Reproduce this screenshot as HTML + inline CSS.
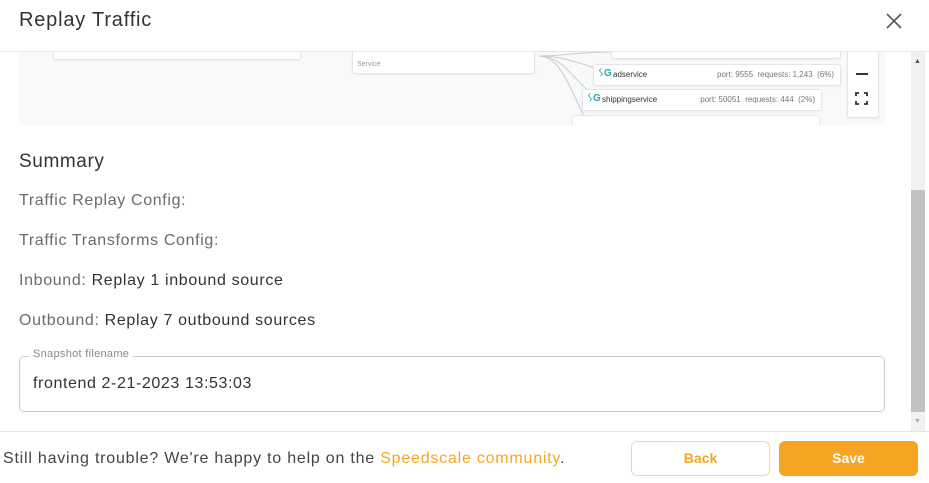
<!DOCTYPE html>
<html><head><style>
body{margin:0;width:929px;height:483px;overflow:hidden;background:#fff;font-family:"Liberation Sans",sans-serif;position:relative}
.a{position:absolute}
.t{color:#6b6b6b;font-size:16px;letter-spacing:0.65px}
.t b{font-weight:normal;color:#333}
.node{position:absolute;background:#fff;border:1px solid #e3e5e8;border-radius:3px;font-size:8px;color:#555;box-shadow:0 1px 2px rgba(0,0,0,.05)}
</style></head><body>
<div class="a" style="left:19px;top:9px;font-size:20px;color:#333;letter-spacing:0.8px">Replay Traffic</div>
<svg class="a" style="left:885px;top:12px" width="18" height="18"><path d="M2 2L16 16M16 2L2 16" stroke="#555" stroke-width="1.6"/></svg>
<div class="a" style="left:0;top:51px;width:929px;height:1px;background:#e5e5e5"></div>
<div class="a" style="left:19px;top:52px;width:866px;height:73px;background:#f8f9fb;overflow:hidden">
 <div class="node" style="left:34px;top:-10px;width:246px;height:16px"></div>
 <div class="node" style="left:333px;top:-10px;width:181px;height:30px"><span style="position:absolute;left:4px;top:18px;font-size:7px;color:#999">Service</span></div>
 <svg class="a" style="left:515px;top:0" width="80" height="73"><g stroke="#ccc" fill="none"><path d="M5 4C30 4 40 10 80 22"/><path d="M5 4C30 4 40 30 65 48"/><path d="M5 4C30 4 40 50 55 73"/><path d="M5 4C30 4 40 0 80 0"/></g></svg>
 <div class="node" style="left:592px;top:-6px;width:228px;height:11px"></div>
 <div class="node" style="left:574px;top:12px;width:246px;height:20px"><span style="position:absolute;left:4px;top:3px;color:#2aa;font-size:10px;font-weight:bold">ᛊG</span><span style="position:absolute;left:19px;top:5px;color:#333">adservice</span><span style="position:absolute;right:6px;top:5px;color:#777">port: 9555 &nbsp;requests: 1,243 &nbsp;(6%)</span></div>
 <div class="node" style="left:563px;top:37px;width:238px;height:20px"><span style="position:absolute;left:4px;top:3px;color:#2aa;font-size:10px;font-weight:bold">ᛊG</span><span style="position:absolute;left:19px;top:5px;color:#333">shippingservice</span><span style="position:absolute;right:6px;top:5px;color:#777">port: 50051 &nbsp;requests: 444 &nbsp;(2%)</span></div>
 <div class="node" style="left:553px;top:63px;width:246px;height:20px"></div>
 <div class="node" style="left:828px;top:-4px;width:30px;height:68px;border-radius:2px">
  <div style="position:absolute;left:8px;top:24px;width:12px;height:2px;background:#333"></div>
  <svg style="position:absolute;left:7px;top:43px" width="13" height="13"><path d="M1 4V1H4M9 1H12V4M12 9V12H9M4 12H1V9" stroke="#333" stroke-width="1.8" fill="none"/></svg>
 </div>
</div>
<div class="a" style="left:911px;top:52px;width:14px;height:379px;background:#f1f1f1"></div>
<div class="a" style="left:911px;top:190px;width:14px;height:222px;background:#c1c1c1"></div>
<div class="a" style="left:914px;top:58px;font-size:7px;color:#555">▲</div>
<div class="a" style="left:914px;top:418px;font-size:7px;color:#aaa">▼</div>
<div class="a" style="left:19px;top:151px;font-size:19px;color:#333;letter-spacing:0.6px">Summary</div>
<div class="a t" style="left:19px;top:192px">Traffic Replay Config:</div>
<div class="a t" style="left:19px;top:232px">Traffic Transforms Config:</div>
<div class="a t" style="left:19px;top:272px">Inbound: <b>Replay 1 inbound source</b></div>
<div class="a t" style="left:19px;top:312px">Outbound: <b>Replay 7 outbound sources</b></div>
<div class="a" style="left:19px;top:356px;width:864px;height:54px;border:1px solid #ccc;border-radius:5px"></div>
<div class="a" style="left:29px;top:348px;background:#fff;padding:0 4px;font-size:11px;color:#888;letter-spacing:0.3px">Snapshot filename</div>
<div class="a" style="left:33px;top:375px;font-size:16px;color:#333;letter-spacing:0.6px">frontend 2-21-2023 13:53:03</div>
<div class="a" style="left:0;top:431px;width:929px;height:1px;background:#e5e5e5"></div>
<div class="a" style="left:3px;top:450px;font-size:16px;color:#444;letter-spacing:0.78px">Still having trouble? We're happy to help on the <span style="color:#f5a623">Speedscale community</span>.</div>
<div class="a" style="left:631px;top:441px;width:137px;height:33px;border:1px solid #f7d59b;border-radius:6px;color:#f5a623;font-size:14px;font-weight:bold;text-align:center;line-height:33px">Back</div>
<div class="a" style="left:779px;top:441px;width:139px;height:35px;background:#f7a323;border-radius:6px;color:#fff;font-size:14px;font-weight:bold;text-align:center;line-height:35px">Save</div>
</body></html>
